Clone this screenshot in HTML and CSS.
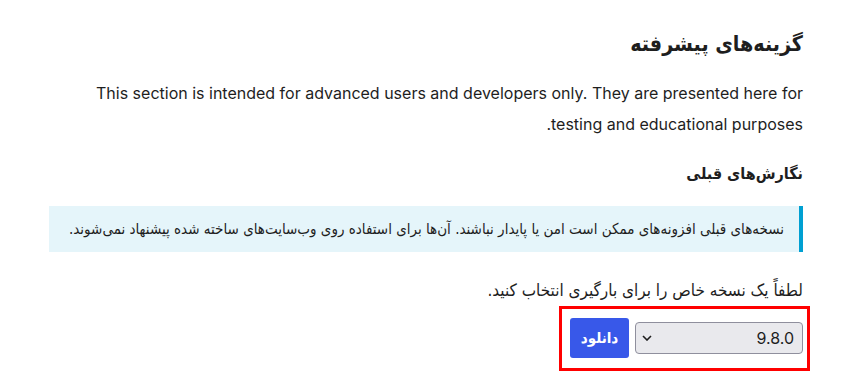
FILE: index.html
```html
<!DOCTYPE html>
<html lang="fa" dir="rtl">
<head>
    <meta charset="UTF-8">
    <meta name="viewport" content="width=device-width, initial-scale=1.0">
    <title>گزینه‌های پیشرفته</title>
    <link rel="stylesheet" href="styles.css">
</head>
<body>
    <main class="advanced">
        <h1>گزینه‌های پیشرفته</h1>
        <p class="intro" dir="ltr">This section is intended for advanced users and developers only. They are presented here for<br><span class="rtl-line">.testing and educational purposes</span></p>

        <h2>نگارش‌های قبلی</h2>
        <div class="notice">
            <p>نسخه‌های قبلی افزونه‌های ممکن است امن یا پایدار نباشند. آن‌ها برای استفاده روی وب‌سایت‌های ساخته شده پیشنهاد نمی‌شوند.</p>
        </div>

        <p class="choose">لطفاً یک نسخه خاص را برای بارگیری انتخاب کنید.</p>
        <form class="download-form">
            <div class="select-wrap">
                <select class="version-select">
                    <option>9.8.0</option>
                </select>
                <svg class="chevron" width="10" height="6" viewBox="0 0 10 6"><path d="M1 1l4 4 4-4" fill="none" stroke="#1e1e1e" stroke-width="1.6"/></svg>
            </div>
            <button type="button" class="download-button">دانلود</button>
        </form>
    </main>
</body>
</html>
```

FILE: styles.css
```css
body {
    margin: 0;
    background: #fff;
    color: #1e1e1e;
    font-family: Inter, "DejaVu Sans Condensed", sans-serif;
}

.advanced {
    margin: 0 52px 0 49px;
    padding-top: 28px;
}

h1 {
    font-family: "DejaVu Sans Condensed", "DejaVu Sans", sans-serif;
    font-size: 21.3px;
    font-weight: bold;
    margin: 0 0 18px;
    line-height: 32px;
}

.intro {
    font-size: 16px;
    line-height: 31px;
    margin: 0;
    text-align: right;
}

h2 {
    font-family: "DejaVu Sans Condensed", "DejaVu Sans", sans-serif;
    font-size: 16px;
    font-weight: bold;
    margin: 22px 0 20px;
    line-height: 24px;
}

.notice {
    background: #e5f5fa;
    border-right: 4px solid #00a0d2;
    padding: 13px 15px 13px 8px;
}

.notice p {
    margin: 0;
    font-family: "DejaVu Sans Condensed", "DejaVu Sans", sans-serif;
    font-size: 15px;
    line-height: 20px;
}

.choose {
    font-family: "DejaVu Sans Condensed", "DejaVu Sans", sans-serif;
    font-size: 17px;
    margin: 26px 0 4px;
    line-height: 24px;
}

.download-form {
    display: inline-flex;
    align-items: center;
    gap: 6px;
    padding: 9px 4px 10px 8px;
    margin-right: -7px;
    border: 3px solid #f00;
}

.select-wrap {
    position: relative;
}

.version-select {
    appearance: none;
    display: block;
    width: 168px;
    height: 32px;
    padding: 0 8px 0 28px;
    font-family: Inter, sans-serif;
    font-size: 16px;
    background: #e9e9ed;
    border: 1px solid #8f8f9d;
    border-radius: 4px;
    color: #1e1e1e;
}

.chevron {
    position: absolute;
    left: 7px;
    top: 13px;
    pointer-events: none;
}

.download-button {
    width: 59px;
    height: 40px;
    background: #3858e9;
    color: #fff;
    border: none;
    border-radius: 3px;
    font-family: "DejaVu Sans Condensed", "DejaVu Sans", sans-serif;
    font-weight: bold;
    font-size: 15px;
    cursor: pointer;
}
```
